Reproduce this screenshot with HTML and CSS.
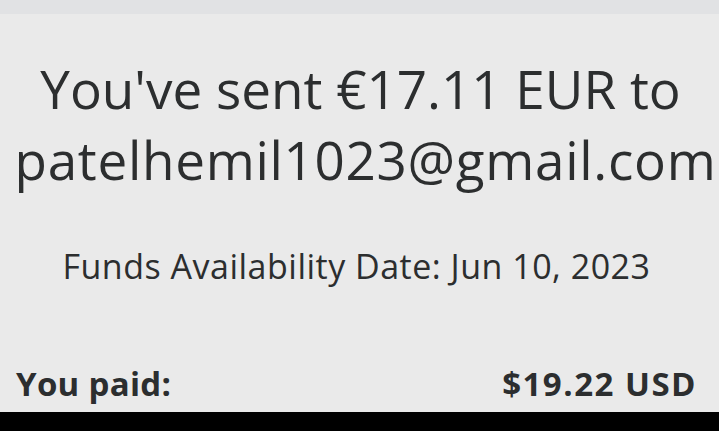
FILE: index.html
```html
<!DOCTYPE html>
<html>
  <head>
    <title>payment sent</title>
    <link rel="stylesheet" href="styles.css">
  </head>

  <body>
    <div class="topbar"></div>
    <div class="content">
      <h1 class="sent-title">You've sent €17.11 EUR to <span class="email">patelhemil1023@gmail.com</span></h1>
      <p class="funds">Funds Availability Date: Jun 10, 2023</p>
      <div class="paid-row">
        <span>You paid:</span>
        <span class="amount">$19.22 USD</span>
      </div>
    </div>
    <div class="bottombar"></div>
  </body>
</html>
```

FILE: styles.css
```css
/* page */
body {
  margin: 0;
  height: 431px;
  overflow: hidden;
  background-color: #eaeaea;
  font-family: "Open Sans", "Noto Sans", sans-serif;
  color: #2c2e2f;
  display: flex;
  flex-direction: column;
}

.topbar {
  height: 14px;
  background-color: #e1e2e4;
}

.content {
  flex: 1;
  display: flex;
  flex-direction: column;
  padding: 0 22px 0 16px;
}

/* big headline */
.sent-title {
  margin: 39px -24px 0 -16px;
  font-size: 53px;
  font-weight: 400;
  line-height: 71px;
  text-align: center;
}

.email {
  padding-left: 10px;
  letter-spacing: 0.7px;
}

.funds {
  margin: 51px 0 0 0;
  font-size: 34px;
  line-height: 40px;
  text-align: center;
  letter-spacing: 0.5px;
}

.paid-row {
  margin-top: 75px;
  display: flex;
  justify-content: space-between;
  font-size: 33px;
  font-weight: 700;
  letter-spacing: 0.3px;
}

.amount {
  letter-spacing: 1.5px;
}

.bottombar {
  height: 19px;
  background-color: #000;
}
```
